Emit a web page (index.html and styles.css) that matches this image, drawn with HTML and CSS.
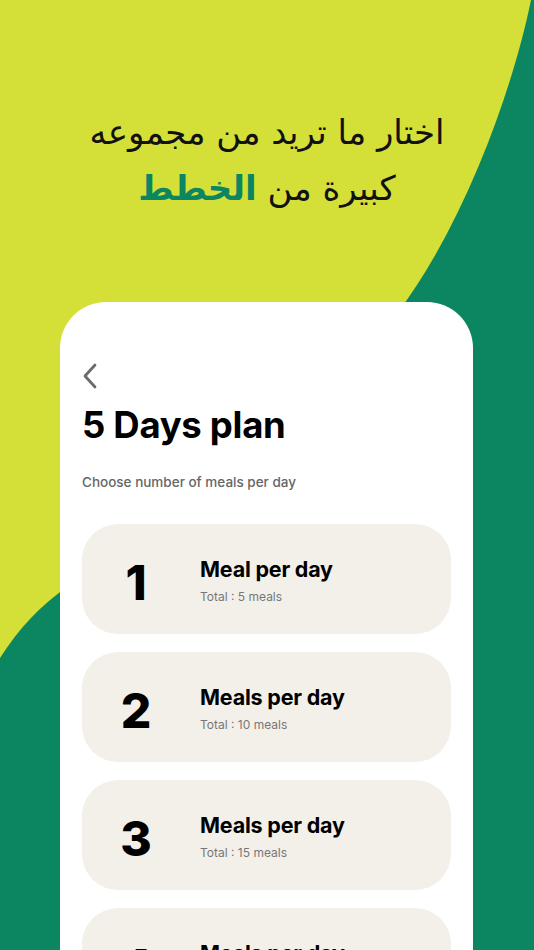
FILE: index.html
```html
<!DOCTYPE html>
<html lang="ar">
<head>
<meta charset="utf-8">
<link rel="stylesheet" href="styles.css">
</head>
<body>
<div class="screen">
  <svg class="bg" width="534" height="950" viewBox="0 0 534 950">
    <path d="M531,0 C515,80 468,220 396,315 L70,585 C40,605 18,630 0,658 L0,950 L534,950 L534,0 Z" fill="#0c8660"/>
  </svg>
  <h1 class="headline" dir="rtl">
    <span class="line">اختار ما تريد من مجموعه</span>
    <span class="line">كبيرة من <span class="accent">الخطط</span></span>
  </h1>
  <main class="card">
    <svg class="back" width="16" height="26" viewBox="0 0 16 26">
      <path d="M13,2 L3,13 L13,24" fill="none" stroke="#6b6b6b" stroke-width="2.8" stroke-linecap="round" stroke-linejoin="round"/>
    </svg>
    <h2 class="title">5 Days plan</h2>
    <p class="subtitle">Choose number of meals per day</p>
    <ul class="options">
      <li class="option"><span class="num">1</span><div class="info"><span class="label">Meal per day</span><span class="total">Total : 5 meals</span></div></li>
      <li class="option"><span class="num">2</span><div class="info"><span class="label">Meals per day</span><span class="total">Total : 10 meals</span></div></li>
      <li class="option"><span class="num">3</span><div class="info"><span class="label">Meals per day</span><span class="total">Total : 15 meals</span></div></li>
      <li class="option"><span class="num">4</span><div class="info"><span class="label">Meals per day</span><span class="total">Total : 20 meals</span></div></li>
    </ul>
  </main>
</div>
</body>
</html>
```
FILE: styles.css
```css
* { box-sizing: border-box; }
html, body { margin: 0; padding: 0; }
body { background: #d4df38; }
.screen {
  position: relative;
  width: 534px;
  height: 950px;
  overflow: hidden;
  background: #d4df38;
  font-family: "Inter", "Open Sans", sans-serif;
}
.bg { position: absolute; left: 0; top: 0; }
.headline {
  position: relative;
  margin: 0;
  padding-top: 104px;
  text-align: center;
  font-family: "DejaVu Sans", "Noto Sans", sans-serif;
  font-weight: normal;
  font-size: 34px;
  line-height: 56px;
  color: #111;
}
.line { display: block; }
.accent { color: #0c8660; font-weight: bold; }
.card {
  position: relative;
  margin: 86px 0 0 60px;
  width: 413px;
  height: 760px;
  background: #fff;
  border-radius: 46px 46px 0 0;
  padding: 61px 22px 0 22px;
}
.back { display: block; margin-left: 0; }
.title {
  margin: 14px 0 0 0;
  font-size: 36.5px;
  font-weight: 700;
  color: #000;
  letter-spacing: -0.3px;
  line-height: 44px;
}
.subtitle {
  margin: 26px 0 0 0;
  font-size: 13.5px;
  font-weight: 500;
  color: #666;
  line-height: 18px;
}
.options {
  list-style: none;
  margin: 33px 0 0 0;
  padding: 0;
  display: flex;
  flex-direction: column;
  gap: 18px;
}
.option {
  height: 110px;
  background: #f3f0e9;
  border-radius: 36px;
  display: flex;
  align-items: center;
}
.num {
  width: 108px;
  margin-right: 10px;
  text-align: center;
  font-size: 48px;
  font-weight: 800;
  color: #000;
  padding-top: 6px;
}
.info { display: flex; flex-direction: column; padding-top: 0; }
.label {
  font-size: 21.5px;
  font-weight: 700;
  color: #000;
  line-height: 28px;
  letter-spacing: -0.2px;
}
.total {
  font-size: 12px;
  color: #777;
  margin-top: 6px;
}
```
